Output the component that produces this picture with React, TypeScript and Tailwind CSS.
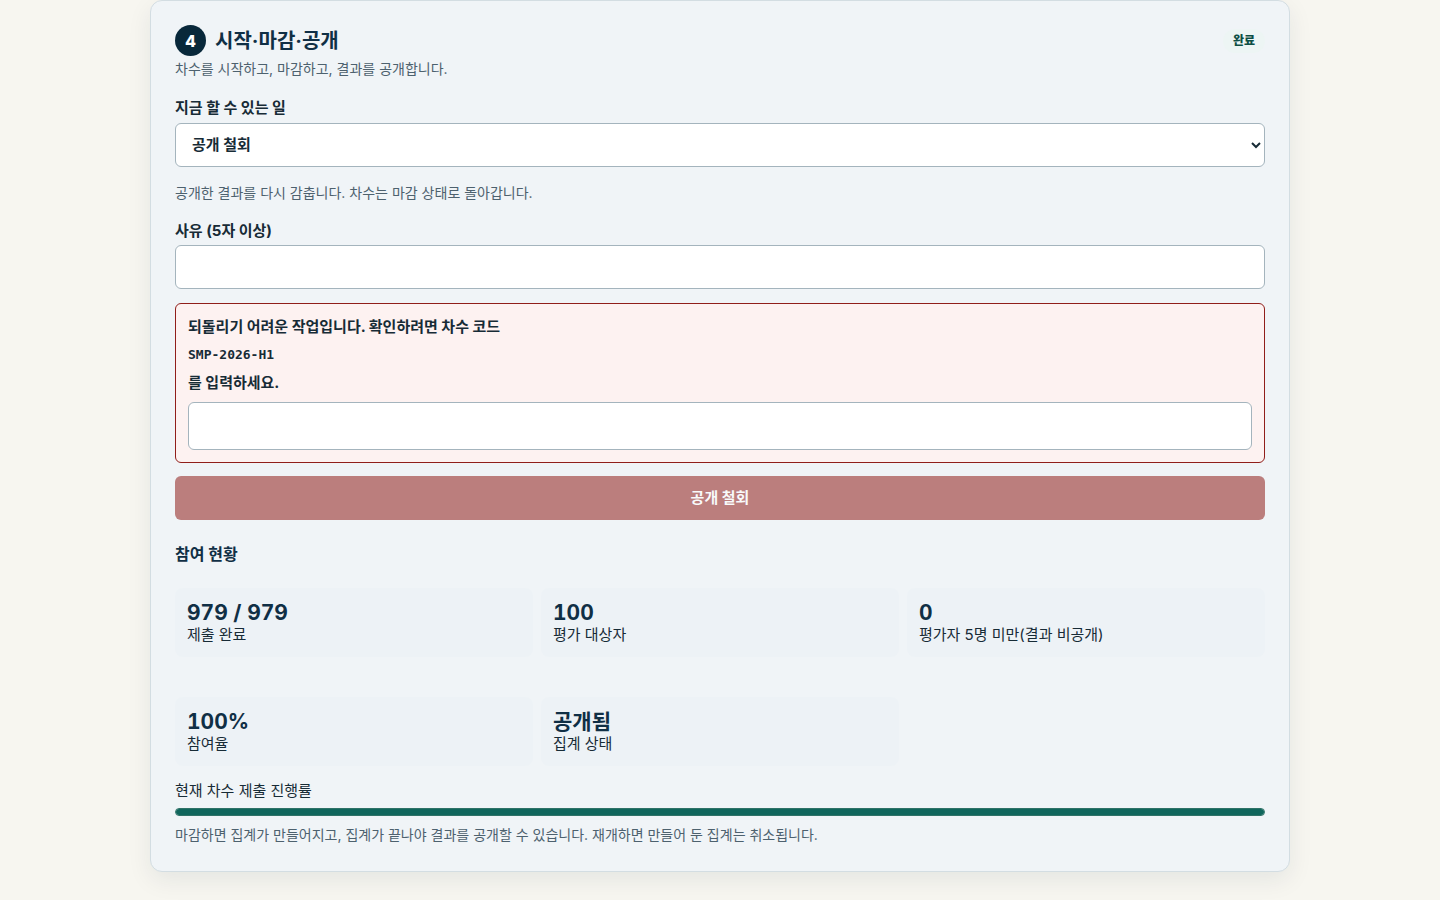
import { useState } from "react";

const stats = [
  { value: "979 / 979", label: "제출 완료" },
  { value: "100", label: "평가 대상자" },
  { value: "0", label: "평가자 5명 미만(결과 비공개)" },
  { value: "100%", label: "참여율" },
  { value: "공개됨", label: "집계 상태" },
];

const CODE = "SMP-2026-H1";

export default function App() {
  const [action, setAction] = useState("unpublish");
  const [reason, setReason] = useState("");
  const [code, setCode] = useState("");

  const ready = reason.trim().length >= 5 && code === CODE;

  return (
    <main className="min-h-screen bg-[#f7f6f0] px-4 pb-7 font-[Inter,'Noto_Sans_CJK_KR',sans-serif] text-[15px] leading-6 text-[#172b36]">
      <section className="mx-auto max-w-[1140px] rounded-xl border border-[#d3dde2] bg-[#f0f4f7] p-6 shadow-[0_8px_24px_rgba(16,42,58,0.08)]">
        <header className="flex items-center justify-between">
          <div className="flex items-center gap-[9px]">
            <span className="flex h-[31px] w-[31px] items-center justify-center rounded-full bg-[#08283a] text-base font-extrabold text-white">4</span>
            <h2 className="text-xl font-bold text-[#102f45]">시작·마감·공개</h2>
          </div>
          <span className="rounded-full bg-[#edf5f4] px-2.5 text-xs leading-6 font-extrabold text-[#0f4f45]">완료</span>
        </header>
        <p className="text-sm leading-[26px] text-[#4d616e]">차수를 시작하고, 마감하고, 결과를 공개합니다.</p>

        <form onSubmit={(e) => e.preventDefault()}>
          <label htmlFor="action" className="mt-3.5 block font-bold">지금 할 수 있는 일</label>
          <select
            id="action"
            value={action}
            onChange={(e) => setAction(e.target.value)}
            className="mt-[3px] block h-11 w-full rounded-md border border-[#a4b4bd] bg-white px-3 pb-0.5 font-bold"
          >
            <option value="unpublish">공개 철회</option>
          </select>
          <p className="mt-3.5 text-sm leading-6 text-[#4d616e]">공개한 결과를 다시 감춥니다. 차수는 마감 상태로 돌아갑니다.</p>

          <label htmlFor="reason" className="mt-3.5 block font-bold">사유 (5자 이상)</label>
          <input
            id="reason"
            value={reason}
            onChange={(e) => setReason(e.target.value)}
            className="mt-0.5 block h-11 w-full rounded-md border border-[#a4b4bd] bg-white px-3"
          />

          <div className="mt-3.5 rounded-md border border-[#901e1a] bg-[#fdf2f1] p-3">
            <label htmlFor="code" className="grid gap-1.5 font-bold leading-[22px]">
              <span>되돌리기 어려운 작업입니다. 확인하려면 차수 코드</span>
              <code className="font-['DejaVu_Sans_Mono',monospace] text-[13px]">{CODE}</code>
              <span>를 입력하세요.</span>
            </label>
            <input
              id="code"
              value={code}
              onChange={(e) => setCode(e.target.value)}
              className="mt-2 block h-12 w-full rounded-md border border-[#a4b4bd] bg-white px-3"
            />
          </div>

          <button type="submit" disabled={!ready} className="mt-[13px] block h-11 w-full rounded-md bg-[#901e1a] font-bold text-white disabled:opacity-55">
            공개 철회
          </button>
        </form>

        <h3 className="mt-[22px] text-base font-bold text-[#102f45]">참여 현황</h3>
        <dl className="mt-[22px] grid grid-cols-3 gap-x-2 gap-y-10">
          {stats.map((s) => (
            <div key={s.label} className="flex flex-col-reverse rounded-lg bg-[#edf2f6] px-3 pt-[13px] pb-[11px]">
              <dt className="leading-[22px]">{s.label}</dt>
              <dd className="text-[21px] font-bold leading-[23px] text-[#102f45] tabular-nums">{s.value}</dd>
            </div>
          ))}
        </dl>

        <label htmlFor="progress" className="mt-[13px] block">현재 차수 제출 진행률</label>
        <progress
          id="progress"
          value={979}
          max={979}
          className="mt-[5px] block h-2 w-full appearance-none overflow-hidden rounded border border-[#2f7267] [&::-webkit-progress-bar]:bg-[#d5dfe5] [&::-webkit-progress-value]:bg-[#10665c]"
        />
        <p className="mt-[7px] text-sm leading-6 text-[#4d616e]">
          마감하면 집계가 만들어지고, 집계가 끝나야 결과를 공개할 수 있습니다. 재개하면 만들어 둔 집계는 취소됩니다.
        </p>
      </section>
    </main>
  );
}
